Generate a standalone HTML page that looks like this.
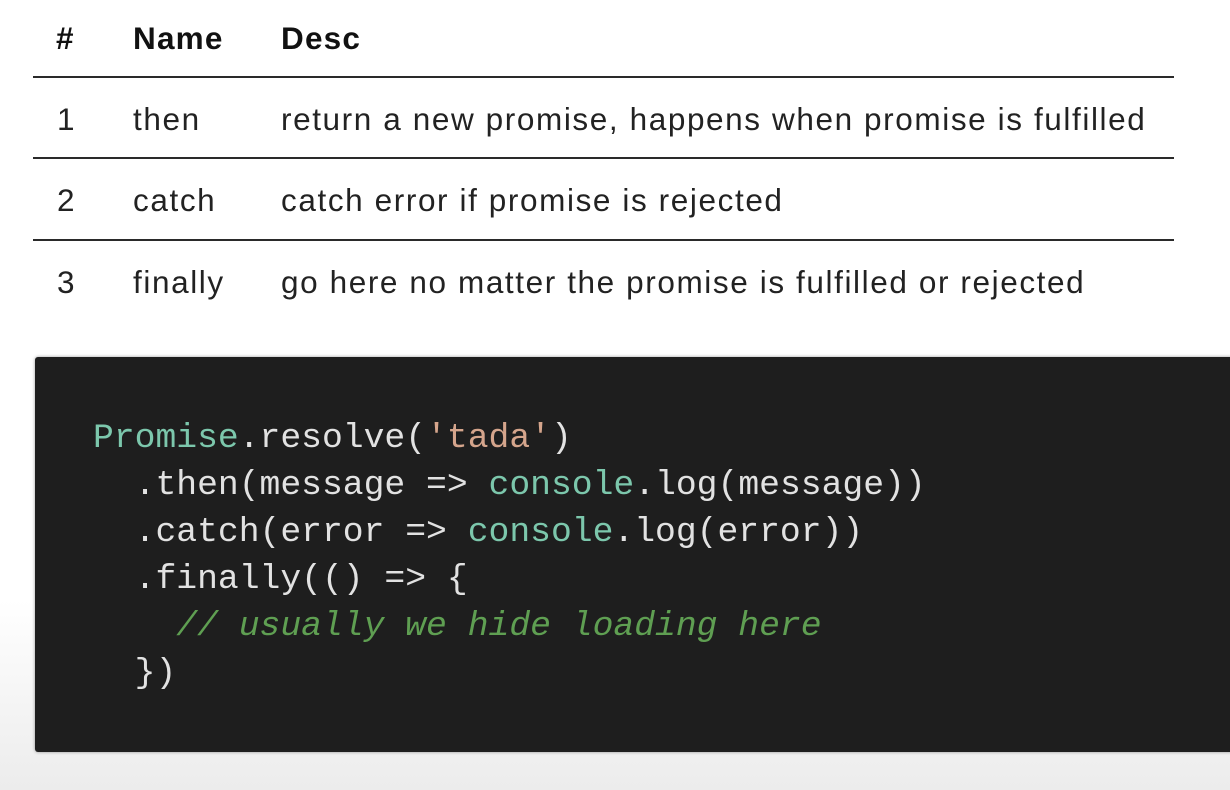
<!DOCTYPE html>
<html><head><style>
html,body{margin:0;padding:0;width:1230px;height:790px;overflow:hidden;background:#fff;font-family:"Liberation Sans",sans-serif;}
.bg{position:absolute;left:0;top:0;width:1230px;height:790px;background:linear-gradient(#fff 0,#fff 600px,#ececec 790px);}
.line{position:absolute;left:33px;width:1141px;height:2px;background:#2a2a2a;}
.t{position:absolute;font-size:31.5px;color:#222;white-space:nowrap;line-height:40px;letter-spacing:1.6px;}
.h{font-weight:bold;color:#111;letter-spacing:1.2px;}
.code{position:absolute;left:35px;top:357px;width:1200px;height:395px;background:#1e1e1e;border-radius:3px;box-shadow:0 0 3px rgba(0,0,0,.4);}
pre{position:absolute;left:58px;top:58px;margin:0;font-family:"Liberation Mono","DejaVu Sans Mono",monospace;font-size:34.7px;line-height:47px;color:#e2e2e2;}
.k{color:#7cc7ac}.s{color:#d5a58c}.c{color:#5f9f52;font-style:italic}
</style></head><body>
<div class="bg"></div>
<div class="t h" style="left:56px;top:18px">#</div>
<div class="t h" style="left:133px;top:18px">Name</div>
<div class="t h" style="left:281px;top:18px">Desc</div>
<div class="line" style="top:76px"></div>
<div class="t" style="left:57px;top:99px">1</div>
<div class="t" style="left:133px;top:99px">then</div>
<div class="t" style="left:281px;top:99px">return a new promise, happens when promise is fulfilled</div>
<div class="line" style="top:157px"></div>
<div class="t" style="left:57px;top:180px">2</div>
<div class="t" style="left:133px;top:180px">catch</div>
<div class="t" style="left:281px;top:180px">catch error if promise is rejected</div>
<div class="line" style="top:239px"></div>
<div class="t" style="left:57px;top:262px">3</div>
<div class="t" style="left:133px;top:262px">finally</div>
<div class="t" style="left:281px;top:262px">go here no matter the promise is fulfilled or rejected</div>
<div class="code"><pre><span class="k">Promise</span>.resolve(<span class="s">'tada'</span>)
  .then(message =&gt; <span class="k">console</span>.log(message))
  .catch(error =&gt; <span class="k">console</span>.log(error))
  .finally(() =&gt; {
    <span class="c">// usually we hide loading here</span>
  })</pre></div>
</body></html>
